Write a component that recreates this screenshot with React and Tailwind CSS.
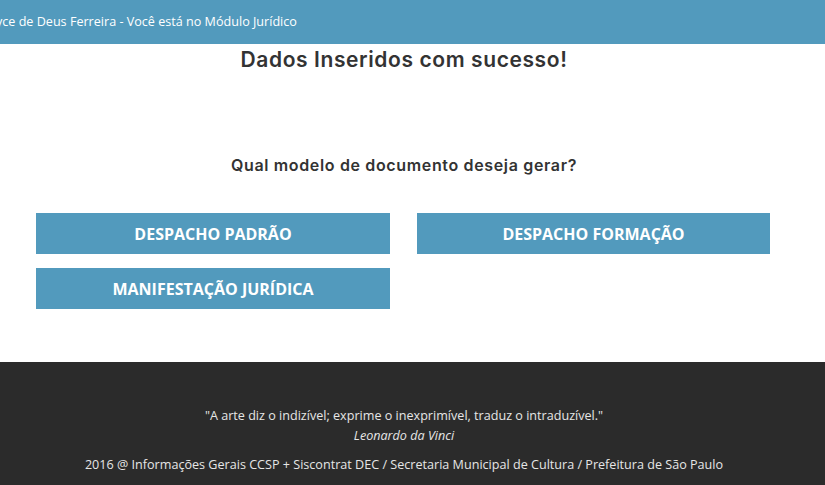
import React from "react";

const buttons = [
  "DESPACHO PADRÃO",
  "DESPACHO FORMAÇÃO",
  "MANIFESTAÇÃO JURÍDICA",
];

const App = () => {
  return (
    <div className="flex min-h-[485px] w-[825px] flex-col bg-white font-['Open_Sans',sans-serif]">
      <header className="flex h-[44px] items-center overflow-hidden bg-[#529abd]">
        <span className="-ml-[15px] whitespace-nowrap text-[12.6px] text-white">
          Joyce de Deus Ferreira - Você está no Módulo Jurídico
        </span>
      </header>

      <main className="flex flex-1 flex-col pr-[17px]">
        <h1 className="mt-[1px] text-center font-['Inter',sans-serif] text-[21px] font-semibold leading-[30px] tracking-[0.6px] text-[#333]">
          Dados Inseridos com sucesso!
        </h1>
        <h2 className="mt-[80px] text-center font-['Inter',sans-serif] text-[16px] font-semibold leading-[20px] tracking-[0.65px] text-[#333]">
          Qual modelo de documento deseja gerar?
        </h2>
        <div className="mt-[38px] grid grid-cols-[354px_353px] gap-x-[27px] gap-y-[14px] pl-[36px]">
          {buttons.map((label) => (
            <button
              key={label}
              className="h-[41px] bg-[#529abd] text-[16px] font-bold text-white"
            >
              {label}
            </button>
          ))}
        </div>
        <div className="h-[52px]" />
      </main>

      <footer className="flex h-[123px] flex-col items-center bg-[#2b2b2b] pr-[17px] pt-[44px] text-[12.6px] text-[#e6e6e6]">
        <p className="leading-[20px]">
          "A arte diz o indizível; exprime o inexprimível, traduz o intraduzível."
        </p>
        <p className="italic leading-[20px]">Leonardo da Vinci</p>
        <p className="mt-[9px] leading-[20px]">
          2016 @ Informações Gerais CCSP + Siscontrat DEC / Secretaria Municipal de Cultura / Prefeitura de São Paulo
        </p>
      </footer>
    </div>
  );
};

export default App;
